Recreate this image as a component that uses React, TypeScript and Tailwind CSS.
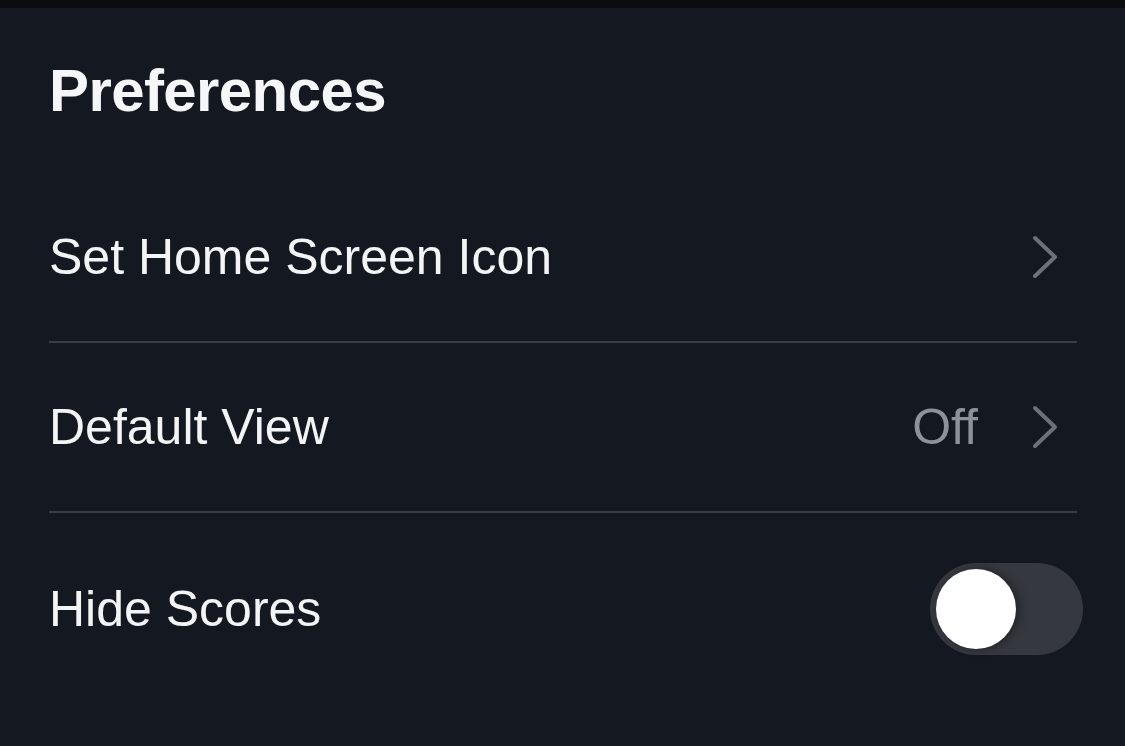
function Chevron() {
  return (
    <svg width="30" height="46" viewBox="0 0 30 46" fill="none" className="block">
      <polyline
        points="5,4 25,23 5,42"
        stroke="#6b7079"
        strokeWidth="4"
        strokeLinecap="round"
        strokeLinejoin="round"
      />
    </svg>
  )
}

function Row({ label, value, last }: { label: string; value?: string; last?: boolean }) {
  return (
    <div className={`flex items-center justify-between h-[170px] ${last ? '' : 'border-b-2 border-[#393d45]'}`}>
      <span className="text-[50px] leading-none text-[#f3f4f6]">{label}</span>
      <div className="flex items-center mr-[17px]">
        {value && <span className="text-[50px] leading-none text-[#8d929a] mr-[52px]">{value}</span>}
        <Chevron />
      </div>
    </div>
  )
}

export default function App() {
  return (
    <div className="w-[1125px] h-[746px] bg-[#141820] font-['Liberation_Sans',sans-serif] overflow-hidden">
      <div className="h-[8px] bg-[#0a0c0f]" />
      <div className="pl-[49px] pr-[48px]">
        <h1 className="mt-[53px] mb-[52px] text-[60px] leading-none font-bold tracking-[-0.01em] text-[#f5f6f8]">
          Preferences
        </h1>
        <Row label="Set Home Screen Icon" />
        <Row label="Default View" value="Off" />
        <div className="flex items-center justify-between h-[192px]">
          <span className="text-[50px] leading-none text-[#f3f4f6]">Hide Scores</span>
          <button className="relative -mr-[6px] w-[153px] h-[92px] rounded-full bg-[#35383f] p-[6px] flex items-center">
            <span className="block w-[80px] h-[80px] rounded-full bg-white shadow-[4px_0_10px_rgba(0,0,0,0.35)]" />
          </button>
        </div>
      </div>
    </div>
  )
}
